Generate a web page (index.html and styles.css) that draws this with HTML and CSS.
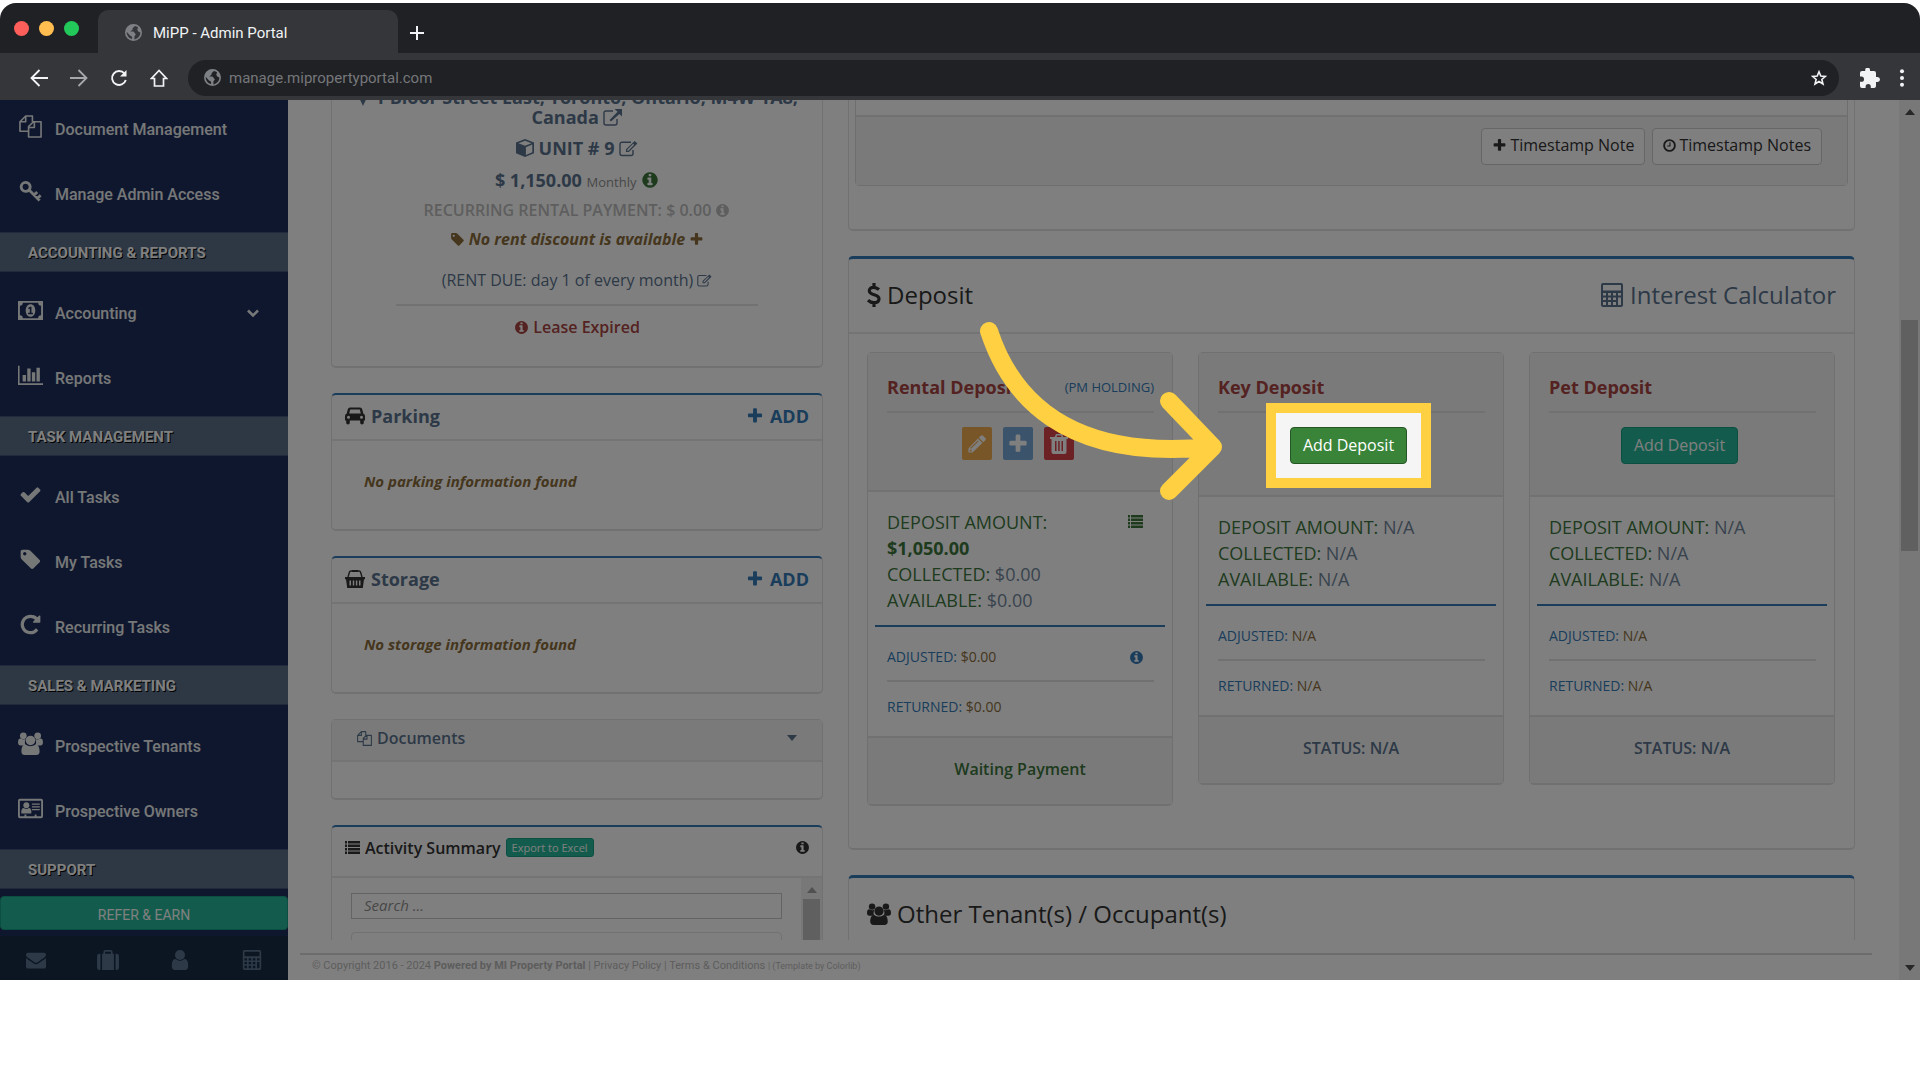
FILE: index.html
```
<!DOCTYPE html>
<html lang="en">

<head>
    <meta charset="UTF-8">
    <meta name="viewport" content="width=device-width, initial-scale=1.0">
    <title>MiPP - Admin Portal</title>
    <link rel="stylesheet" href="styles.css">
</head>

<body>
    <!-- icon set -->
    <svg class="sprite" aria-hidden="true">
        <symbol id="plus" viewBox="0 0 1792 1792"><path d="M1600 736v192q0 40-28 68t-68 28h-416v416q0 40-28 68t-68 28h-192q-40 0-68-28t-28-68v-416h-416q-40 0-68-28t-28-68v-192q0-40 28-68t68-28h416v-416q0-40 28-68t68-28h192q40 0 68 28t28 68v416h416q40 0 68 28t28 68z"/></symbol>
        <symbol id="info" viewBox="0 0 1792 1792"><path d="M1152 1376v-160q0-14-9-23t-23-9h-96v-512q0-14-9-23t-23-9h-320q-14 0-23 9t-9 23v160q0 14 9 23t23 9h96v320h-96q-14 0-23 9t-9 23v160q0 14 9 23t23 9h448q14 0 23-9t9-23zm-128-896v-160q0-14-9-23t-23-9h-192q-14 0-23 9t-9 23v160q0 14 9 23t23 9h192q14 0 23-9t9-23zm640 416q0 209-103 385.500t-279.500 279.500-385.500 103-385.500-103-279.500-279.500-103-385.500 103-385.500 279.500-279.500 385.500-103 385.500 103 279.500 279.500 103 385.500z"/></symbol>
        <symbol id="check" viewBox="0 0 1792 1792"><path d="M1671 566q0 40-28 68l-724 724-136 136q-28 28-68 28t-68-28l-136-136-362-362q-28-28-28-68t28-68l136-136q28-28 68-28t68 28l294 295 656-657q28-28 68-28t68 28l136 136q28 28 28 68z"/></symbol>
        <symbol id="tag" viewBox="0 0 1792 1792"><path d="M576 448q0-53-37.500-90.500t-90.500-37.500-90.500 37.500-37.500 90.500 37.500 90.500 90.500 37.500 90.500-37.500 37.500-90.500zm1067 576q0 53-37 90l-491 492q-39 37-91 37-53 0-90-37l-715-716q-38-37-64.500-101t-26.500-117v-416q0-52 38-90t90-38h416q53 0 117 26.500t102 64.500l715 714q37 39 37 91z"/></symbol>
        <symbol id="repeat" viewBox="0 0 1792 1792"><path d="M1664 256v448q0 26-19 45t-45 19h-448q-42 0-59-40-17-39 14-69l138-138q-148-137-349-137-104 0-198.500 40.500t-163.500 109.500-109.500 163.500-40.500 198.500 40.500 198.500 109.500 163.500 163.500 109.500 198.500 40.500q119 0 225-52t179-147q7-10 23-12 15 0 25 9l137 138q9 8 9.500 20.500t-7.500 22.500q-109 132-264 204.500t-327 72.500q-156 0-298-61t-245-164-164-245-61-298 61-298 164-245 245-164 298-61q147 0 284.500 55.500t244.500 156.500l130-129q29-31 70-14 39 17 39 59z"/></symbol>
        <symbol id="envelope" viewBox="0 0 1792 1792"><path d="M1792 710v794q0 66-47 113t-113 47h-1472q-66 0-113-47t-47-113v-794q44 49 101 87 362 246 497 345 57 42 92.500 65.500t94.500 48 110 24.500h2q51 0 110-24.500t94.500-48 92.500-65.500q170-123 498-345 57-39 100-87zm0-294q0 79-49 151t-122 123q-376 261-468 325-10 7-42.500 31t-54 38.500-52 32.500-57.500 27-50 9h-2q-23 0-50-9t-57.500-27-52-32.500-54-38.500-42.500-31q-91-64-262-182.500t-205-142.500q-62-42-117-115.500t-55-136.500q0-78 41.500-130t118.500-52h1472q65 0 112.500 47t47.500 113z"/></symbol>
        <symbol id="docs" viewBox="0 0 24 24"><path fill="none" stroke="currentColor" stroke-width="1.700" stroke-linejoin="round" d="M10 17H1V7l6-6h7v6M7 1v6H1M10 23V12l5-5h8v16zM16 7v6h-6"/></symbol>
        <symbol id="key" viewBox="0 0 24 24"><path fill="none" stroke="currentColor" stroke-width="3" d="M7 2.500a4.700 4.700 0 1 1-.1 9.400 4.700 4.700 0 0 1 .1-9.400zM10 10l11.500 11.500M15.500 16l3.500-3.500M19 19.500l3.500-3.500"/></symbol>
        <symbol id="money" viewBox="0 0 26 20"><path fill-rule="evenodd" d="M0 0h26v20H0zM5 2a3 3 0 0 1-3 3v10a3 3 0 0 1 3 3h16a3 3 0 0 1 3-3V5a3 3 0 0 1-3-3z"/><path fill-rule="evenodd" d="M13 3.500c3 0 5 2.800 5 6.500s-2 6.500-5 6.500-5-2.800-5-6.500 2-6.500 5-6.500zM10.500 14h5v-1.600H14V6h-1.500l-2 1.500.8 1.200 1-.7v4.400h-1.800z"/></symbol>
        <symbol id="chart" viewBox="0 0 27 21"><path d="M0 0h1.700v19H27v1.700H0zM5 10h3.600v7H5zM10 3h3.600v14H10zM15 7h3.600v10H15zM20 2h3.600v15H20z"/></symbol>
        <symbol id="users" viewBox="0 0 26 24"><circle cx="5.500" cy="4" r="3.500"/><circle cx="20.500" cy="4" r="3.500"/><path d="M0 11c0-3 1-4.500 3-4 2 1 3.500 1 5 .4-1.400 2.500-1 5 0 6.600H2.500C1 14 0 13 0 11zM26 11c0-3-1-4.500-3-4-2 1-3.500 1-5 .4 1.400 2.500 1 5 0 6.600h5.500c1.500 0 2.500-1 2.500-3z"/><circle cx="13" cy="8.800" r="5"/><path d="M3.500 20.500c0-4 1-7.500 4.500-7.500 3 2.400 7 2.400 10 0 3.500 0 4.500 3.500 4.500 7.500 0 2-1.300 3.500-3.500 3.500H7c-2.200 0-3.500-1.500-3.500-3.500z"/></symbol>
        <symbol id="card" viewBox="0 0 27 21"><path fill-rule="evenodd" d="M2 0h23q2 0 2 2v17q0 2-2 2H2q-2 0-2-2V2q0-2 2-2zM2 2v17h5v-2h2v2h9v-2h2v2h5V2z"/><circle cx="9" cy="7" r="3.200"/><path d="M3.500 15c0-3 .8-5 2.800-5 1.700 1.300 3.700 1.300 5.400 0 2 0 2.800 2 2.800 5 0 .7-.6 1-1.200 1H4.700c-.6 0-1.200-.3-1.200-1zM15 5h8.500v1.500H15zM15 8h8.500v1.500H15zM15 11h8.500v1.500H15z"/></symbol>
        <symbol id="calc" viewBox="0 0 22 24"><path fill-rule="evenodd" d="M2 0h18q2 0 2 2v20q0 2-2 2H2q-2 0-2-2V2q0-2 2-2zM2 2v5.500h18V2zM2 10v2.500h3V10zM7 10v2.500h3V10zM12 10v2.500h3V10zM17 10v2.500h3V10zM2 14.500V17h3v-2.500zM7 14.500V17h3v-2.500zM12 14.500V17h3v-2.500zM2 19v3h3v-3zM7 19v3h3v-3zM12 19v3h3v-3zM17 14.500V22h3v-7.500z"/></symbol>
        <symbol id="suitcase" viewBox="0 0 24 22"><path fill-rule="evenodd" d="M5.500 4H18.500V22H5.500zM7 4V2q0-2 2-2h6q2 0 2 2v2h-1.800V2H8.800v2zM3.700 4v18H2.500Q0 22 0 19.500v-13Q0 4 2.500 4zM20.300 4v18h1.200q2.500 0 2.500-2.500v-13Q24 4 21.500 4z"/></symbol>
        <symbol id="user" viewBox="0 0 18 22"><circle cx="9" cy="5.500" r="5.500"/><path d="M0 18c0-5 1-8 4.300-8 3 2.600 6.400 2.600 9.400 0C17 10 18 13 18 18c0 2.500-1.300 4-3.500 4h-11C1.300 22 0 20.500 0 18z"/></symbol>
        <symbol id="chevron" viewBox="0 0 12 9"><path fill="none" stroke="currentColor" stroke-width="2.600" d="M1 1.500l5 5 5-5"/></symbol>
        <symbol id="marker" viewBox="0 0 14 20"><path fill-rule="evenodd" d="M7 0a6 6 0 0 1 6 6c0 3-4 9-6 14C5 15 1 9 1 6a6 6 0 0 1 6-6zM7 3.500a2.700 2.700 0 1 0 0 5.400 2.700 2.700 0 0 0 0-5.400z"/></symbol>
        <symbol id="external" viewBox="0 0 19 17"><path fill="none" stroke="currentColor" stroke-width="1.400" d="M10 2H3Q1 2 1 4v10q0 2 2 2h9q2 0 2-2v-4"/><path d="M11.500 0H19v7.500l-2.600-2.600L8 12.500 6.600 11l8-8.300z"/></symbol>
        <symbol id="edit" viewBox="0 0 19 16"><path fill="none" stroke="currentColor" stroke-width="1.400" d="M12 1.700H3Q1 1.700 1 3.700V13q0 2 2 2h9q2 0 2-2V9.500"/><path fill-rule="evenodd" d="M15.700.4l2.700 2.700-8.500 8.300H7V8.700zM8.200 9.200v1h1.200l5.800-5.900-1-1z"/></symbol>
        <symbol id="cube" viewBox="0 0 18 18"><path fill-rule="evenodd" d="M9 0l9 3.500v10.800L9 18 0 14.300V3.500zM9 1.700L2.500 4.200 9 6.700l6.500-2.500zM9.900 16l6.400-2.700V5.600L9.900 8.200z"/></symbol>
        <symbol id="car" viewBox="0 0 20 17"><path fill-rule="evenodd" d="M5 0h10q1.700 0 2.200 1.700L18.300 6Q20 6.700 20 8.500V13h-1.200v2.200a1.800 1.800 0 0 1-3.600 0V13H4.800v2.200a1.800 1.800 0 0 1-3.600 0V13H0V8.500Q0 6.700 1.700 6l1.100-4.300Q3.300 0 5 0zM5.200 2l-1 4h11.600l-1-4zM3.500 8.200a1.500 1.500 0 1 0 0 3 1.500 1.500 0 0 0 0-3zM16.500 8.200a1.500 1.500 0 1 0 0 3 1.500 1.500 0 0 0 0-3z"/></symbol>
        <symbol id="basket" viewBox="0 0 20 18"><path fill-rule="evenodd" d="M0 7h20v2.200h-1L17.800 18H2.200L1 9.200H0zM4.500 10.500v5H6v-5zM7.800 10.500v5h1.400v-5zM10.900 10.500v5h1.400v-5zM14 10.500v5h1.500v-5z"/><path d="M7 0h6v2H7z"/><path fill="none" stroke="currentColor" stroke-width="1.400" d="M3 7l1.500-5Q4.800 1 6 1h8q1.200 0 1.500 1L17 7"/></symbol>
        <symbol id="list" viewBox="0 0 15 13"><path d="M0 0h2v2.400H0zM3 0h12v2.400H3zM0 3.500h2v2.400H0zM3 3.500h12v2.400H3zM0 7h2v2.400H0zM3 7h12v2.400H3zM0 10.500h2v2.400H0zM3 10.500h12v2.400H3z"/></symbol>
        <symbol id="clock" viewBox="0 0 14 14"><circle cx="7" cy="7" r="5.800" fill="none" stroke="currentColor" stroke-width="2"/><path fill="none" stroke="currentColor" stroke-width="1.200" d="M7.500 3.500v4h-3"/></symbol>
        <symbol id="pencil" viewBox="0 0 20 20"><path fill-rule="evenodd" d="M14 1q1.500-1.500 3 0l2 2q1.500 1.500 0 3l-2 2-5-5zM11 4l5 5L5 19.500H.5V15zM11 6l-8.500 8.500.8.800L11.800 7zM3 16l-1 1v1.200h1.300l1-.9z"/></symbol>
        <symbol id="trash" viewBox="0 0 18 20"><path fill-rule="evenodd" d="M6 0h6l1.300 3H18v2h-1.500v13q0 2-2 2h-11q-2 0-2-2V5H0V3h4.700zM7 1.500L6.500 3h5L11 1.500zM5 7v10h1.500V7zM8.200 7v10h1.500V7zM11.500 7v10H13V7z"/></symbol>
        <symbol id="dollar" viewBox="0 0 14 24"><path fill="none" stroke="currentColor" stroke-width="3.200" d="M12 6.500C10 4.800 8.300 4.300 6.500 4.300 4 4.300 2.300 5.600 2.300 7.700c0 5 9.700 3 9.700 8 0 2.600-2.200 4-5 4-2.400 0-4.400-.8-6-2.500M7 0v4.500M7 19.500V24"/></symbol>
        <symbol id="globe" viewBox="0 0 18 18"><path fill-rule="evenodd" d="M9 0a9 9 0 1 1 0 18A9 9 0 0 1 9 0zM10.500 2L8 4.500V6L5.500 8H9l2.500 3-1.500 2v3.300A7.300 7.300 0 0 0 16.300 9L14 8l-1-2 .8-2.600A8 8 0 0 0 10.500 2zM1.800 8.200A7.300 7.300 0 0 0 7.500 16v-2.500L5 11.800z"/></symbol>
        <symbol id="back" viewBox="0 0 18 18"><path fill="none" stroke="currentColor" stroke-width="1.800" d="M18 9H2M9.500 1L1.500 9l8 8"/></symbol>
        <symbol id="forward" viewBox="0 0 18 18"><path fill="none" stroke="currentColor" stroke-width="1.800" d="M0 9h16M8.500 1l8 8-8 8"/></symbol>
        <symbol id="reload" viewBox="0 0 18 18"><path fill="none" stroke="currentColor" stroke-width="1.900" d="M14.500 4.500A7 7 0 1 0 15.800 11"/><path d="M16.500 1v6.500H10z"/></symbol>
        <symbol id="home" viewBox="0 0 18 18"><path fill="none" stroke="currentColor" stroke-width="1.700" d="M9 1.500L1.500 9.500h3V17h9V9.500h3z"/></symbol>
        <symbol id="star" viewBox="0 0 18 18"><path fill="none" stroke="currentColor" stroke-width="1.800" d="M9 2l2 4.800 5.200.4-4 3.400 1.300 5.100L9 13l-4.500 2.700 1.300-5.100-4-3.400L7 6.800z"/></symbol>
        <symbol id="puzzle" viewBox="0 0 20 20"><path d="M17.500 9H16V5q0-2-2-2h-4V2a2.400 2.400 0 0 0-4.800 0v1H2Q0 3 0 5v3.600h1.400a2.600 2.600 0 0 1 0 5.200H0V18q0 2 2 2h3.600v-1.400a2.600 2.600 0 0 1 5.200 0V20H14q2 0 2-2v-4h1.500a2.500 2.500 0 0 0 0-5z"/></symbol>
        <symbol id="dots" viewBox="0 0 4 18"><circle cx="2" cy="2.200" r="2"/><circle cx="2" cy="9" r="2"/><circle cx="2" cy="15.800" r="2"/></symbol>
    </svg>

    <div class="browser">
        <div class="tabs">
            <div class="lights"><i class="red"></i><i class="yellow"></i><i class="green"></i></div>
            <div class="tab"><svg class="ic-17"><use href="#globe"/></svg><span>MiPP - Admin Portal</span></div>
            <button class="new-tab" aria-label="New tab"><svg viewBox="0 0 14 14"><path d="M7 0v14M0 7h14" stroke="currentColor" stroke-width="2"/></svg></button>
        </div>
        <div class="toolbar">
            <button aria-label="Back"><svg><use href="#back"/></svg></button>
            <button class="muted" aria-label="Forward"><svg><use href="#forward"/></svg></button>
            <button aria-label="Reload"><svg><use href="#reload"/></svg></button>
            <button aria-label="Home"><svg><use href="#home"/></svg></button>
            <div class="address">
                <svg class="ic-17"><use href="#globe"/></svg>
                <input type="text" aria-label="Address" value="manage.mipropertyportal.com">
                <svg class="star"><use href="#star"/></svg>
            </div>
            <button class="ext" aria-label="Extensions"><svg><use href="#puzzle"/></svg></button>
            <button class="more" aria-label="Menu"><svg><use href="#dots"/></svg></button>
        </div>

        <div class="viewport">
            <aside class="sidebar">
                <nav class="menu">
                    <div class="menu-group">
                        <a href="#"><svg><use href="#docs"/></svg>Document Management</a>
                        <a href="#"><svg><use href="#key"/></svg>Manage Admin Access</a>
                    </div>
                    <h3>ACCOUNTING &amp; REPORTS</h3>
                    <div class="menu-group">
                        <a href="#"><svg><use href="#money"/></svg>Accounting<svg class="chevron"><use href="#chevron"/></svg></a>
                        <a href="#"><svg><use href="#chart"/></svg>Reports</a>
                    </div>
                    <h3>TASK MANAGEMENT</h3>
                    <div class="menu-group">
                        <a href="#"><svg><use href="#check"/></svg>All Tasks</a>
                        <a href="#"><svg><use href="#tag"/></svg>My Tasks</a>
                        <a href="#"><svg><use href="#repeat"/></svg>Recurring Tasks</a>
                    </div>
                    <h3>SALES &amp; MARKETING</h3>
                    <div class="menu-group">
                        <a href="#"><svg><use href="#users"/></svg>Prospective Tenants</a>
                        <a href="#"><svg><use href="#card"/></svg>Prospective Owners</a>
                    </div>
                    <h3>SUPPORT</h3>
                </nav>
                <button class="refer">REFER &amp; EARN</button>
                <div class="shortcuts">
                    <a href="#" aria-label="Mail"><svg><use href="#envelope"/></svg></a>
                    <a href="#" aria-label="Portfolio"><svg><use href="#suitcase"/></svg></a>
                    <a href="#" aria-label="Profile"><svg><use href="#user"/></svg></a>
                    <a href="#" aria-label="Calculator"><svg><use href="#calc"/></svg></a>
                </div>
            </aside>

            <main class="main">
                <div class="columns">
                    <div class="col">
                        <section class="panel lease">
                            <div class="address-line"><svg class="ic-marker"><use href="#marker"/></svg> 1 Bloor Street East, Toronto, Ontario, M4W 1A8, Canada <svg class="ic-19"><use href="#external"/></svg></div>
                            <div class="unit"><svg class="ic-18"><use href="#cube"/></svg> UNIT # 9 <svg class="ic-19"><use href="#edit"/></svg></div>
                            <div class="rent">$ 1,150.00 <small>Monthly</small> <svg class="ic-18 success"><use href="#info"/></svg></div>
                            <div class="recurring">RECURRING RENTAL PAYMENT: $ 0.00 <svg class="ic-15"><use href="#info"/></svg></div>
                            <div class="discount"><svg class="ic-15"><use href="#tag"/></svg> No rent discount is available <svg class="ic-15"><use href="#plus"/></svg></div>
                            <div class="due">(RENT DUE: day 1 of every month) <svg class="ic-15"><use href="#edit"/></svg></div>
                            <hr>
                            <div class="expired"><svg class="ic-15"><use href="#info"/></svg> Lease Expired</div>
                        </section>

                        <section class="panel top-line small-panel">
                            <header>
                                <h4><svg class="ic-20"><use href="#car"/></svg>Parking</h4>
                                <a href="#"><svg class="ic-18"><use href="#plus"/></svg>ADD</a>
                            </header>
                            <p>No parking information found</p>
                        </section>

                        <section class="panel top-line small-panel">
                            <header>
                                <h4><svg class="ic-20"><use href="#basket"/></svg>Storage</h4>
                                <a href="#"><svg class="ic-18"><use href="#plus"/></svg>ADD</a>
                            </header>
                            <p>No storage information found</p>
                        </section>

                        <section class="panel documents">
                            <header>
                                <h4><svg class="ic-15"><use href="#docs"/></svg>Documents</h4>
                                <svg class="caret" viewBox="0 0 10 6"><path d="M0 0h10L5 6z"/></svg>
                            </header>
                        </section>

                        <section class="panel top-line activity">
                            <header>
                                <svg class="ic-15"><use href="#list"/></svg>
                                <h4>Activity Summary</h4>
                                <button class="badge">Export to Excel</button>
                                <svg class="ic-15 last"><use href="#info"/></svg>
                            </header>
                            <div class="activity-body">
                                <div class="activity-list">
                                    <input type="text" placeholder="Search ..." aria-label="Search activity">
                                    <div class="entry"></div>
                                </div>
                                <div class="scrollbar inner">
                                    <svg viewBox="0 0 10 6"><path d="M0 6h10L5 0z"/></svg>
                                    <div class="thumb"></div>
                                </div>
                            </div>
                        </section>
                    </div>

                    <div class="col">
                        <section class="panel notes">
                            <div class="notes-box">
                                <footer>
                                    <button class="btn-default"><svg class="ic-15"><use href="#plus"/></svg>Timestamp Note</button>
                                    <button class="btn-default"><svg class="ic-13"><use href="#clock"/></svg>Timestamp Notes</button>
                                </footer>
                            </div>
                        </section>

                        <section class="panel top-line-lg deposits">
                            <header>
                                <h2><svg class="ic-dollar"><use href="#dollar"/></svg>Deposit</h2>
                                <a href="#"><svg class="ic-24"><use href="#calc"/></svg>Interest Calculator</a>
                            </header>
                            <div class="cards">
                                <article class="card">
                                    <div class="card-head">
                                        <div class="card-title"><h4>Rental Deposit</h4><small>(PM HOLDING)</small></div>
                                        <div class="actions short">
                                            <button class="sq orange" aria-label="Edit"><svg><use href="#pencil"/></svg></button>
                                            <button class="sq blue" aria-label="Add"><svg class="big"><use href="#plus"/></svg></button>
                                            <button class="sq crimson" aria-label="Delete"><svg><use href="#trash"/></svg></button>
                                        </div>
                                    </div>
                                    <div class="card-body">
                                        <div class="totals">
                                            <div><div>DEPOSIT AMOUNT: <b>$1,050.00</b></div><svg class="ic-15"><use href="#list"/></svg></div>
                                            <div>COLLECTED: <span>$0.00</span></div>
                                            <div>AVAILABLE: <span>$0.00</span></div>
                                        </div>
                                        <div class="line"><div>ADJUSTED: <span>$0.00</span></div><svg class="ic-15"><use href="#info"/></svg></div>
                                        <div class="line">RETURNED: <span>$0.00</span></div>
                                    </div>
                                    <div class="card-foot success">Waiting Payment</div>
                                </article>

                                <article class="card">
                                    <div class="card-head">
                                        <div class="card-title"><h4>Key Deposit</h4></div>
                                        <div class="actions">
                                            <div class="step">
                                                <button class="btn-add active">Add Deposit</button>
                                                <div class="spotlight"></div>
                                                <svg class="arrow" viewBox="0 0 260 190"><path d="M23 19C43 80 95 150 245 135M203 89l44 46-44 44"/></svg>
                                            </div>
                                        </div>
                                    </div>
                                    <div class="card-body">
                                        <div class="totals">
                                            <div>DEPOSIT AMOUNT: <span>N/A</span></div>
                                            <div>COLLECTED: <span>N/A</span></div>
                                            <div>AVAILABLE: <span>N/A</span></div>
                                        </div>
                                        <div class="line">ADJUSTED: <span>N/A</span></div>
                                        <div class="line">RETURNED: <span>N/A</span></div>
                                    </div>
                                    <div class="card-foot">STATUS: N/A</div>
                                </article>

                                <article class="card">
                                    <div class="card-head">
                                        <div class="card-title"><h4>Pet Deposit</h4></div>
                                        <div class="actions"><button class="btn-add">Add Deposit</button></div>
                                    </div>
                                    <div class="card-body">
                                        <div class="totals">
                                            <div>DEPOSIT AMOUNT: <span>N/A</span></div>
                                            <div>COLLECTED: <span>N/A</span></div>
                                            <div>AVAILABLE: <span>N/A</span></div>
                                        </div>
                                        <div class="line">ADJUSTED: <span>N/A</span></div>
                                        <div class="line">RETURNED: <span>N/A</span></div>
                                    </div>
                                    <div class="card-foot">STATUS: N/A</div>
                                </article>
                            </div>
                        </section>

                        <section class="panel top-line-lg tenants">
                            <header>
                                <h2><svg class="ic-24"><use href="#users"/></svg>Other Tenant(s) / Occupant(s)</h2>
                            </header>
                        </section>
                    </div>
                </div>
                <footer class="page-foot">
                    <div>© Copyright 2016 - 2024 <b>Powered by MI Property Portal</b> | <a href="#">Privacy Policy</a> | <a href="#">Terms &amp; Conditions</a> <small>| (Template by <a href="#">Colorlib</a>)</small></div>
                </footer>
            </main>

            <div class="scrollbar">
                <svg viewBox="0 0 10 6"><path d="M0 6h10L5 0z"/></svg>
                <div class="thumb"></div>
                <svg viewBox="0 0 10 6"><path d="M0 0h10L5 6z"/></svg>
            </div>
        </div>
    </div>
</body>

</html>
```
FILE: styles.css
```
* {
    box-sizing: border-box;
}

body {
    margin: 0;
    padding-top: 3px;
    background: #fff;
    font-family: "Open Sans", "Noto Sans", sans-serif;
    font-size: 16px;
    color: #5a738e;
}

h2, h3, h4, p {
    margin: 0;
}

a {
    color: inherit;
    text-decoration: none;
}

button, input {
    font-family: inherit;
    margin: 0;
}

button {
    cursor: pointer;
}

svg {
    fill: currentColor;
    flex: none;
}

.sprite {
    display: none;
}

.ic-13 { width: 13px; height: 13px; }
.ic-15 { width: 15px; height: 15px; }
.ic-17 { width: 17px; height: 17px; }
.ic-18 { width: 18px; height: 18px; }
.ic-19 { width: 19px; height: 17px; }
.ic-20 { width: 20px; height: 18px; }
.ic-24 { width: 24px; height: 24px; }
.ic-marker { width: 14px; height: 18px; }
.ic-dollar { width: 14px; height: 24px; }

/* browser frame */

.browser {
    display: flex;
    flex-direction: column;
    height: calc(100vh - 103px);
    border-radius: 16px 16px 0 0;
    overflow: hidden;
    background: #202124;
    font-family: Roboto, sans-serif;
}

.tabs {
    display: flex;
    align-items: flex-end;
    height: 50px;
    color: #f1f3f4;
}

.lights {
    display: flex;
    gap: 10px;
    width: 98px;
    padding: 0 0 17px 14px;
}

.lights i {
    width: 15px;
    height: 15px;
    border-radius: 50%;
}

.red { background: #ff5f5a; }
.yellow { background: #ffbe4f; }
.green { background: #22c95a; }

.tab {
    display: flex;
    align-items: center;
    gap: 11px;
    width: 300px;
    height: 43px;
    padding: 2px 0 0 27px;
    border-radius: 10px 10px 0 0;
    background: #35363a;
    font-size: 15px;
}

.tab svg, .address .ic-17 {
    color: #7d8084;
}

.new-tab {
    height: 40px;
    padding: 0 12px;
    border: 0;
    background: none;
    color: #f1f3f4;
}

.new-tab svg {
    display: block;
    width: 14px;
    height: 14px;
}

.toolbar {
    display: flex;
    align-items: center;
    height: 47px;
    padding: 2px 9px 0 19px;
    background: #35363a;
}

.toolbar button {
    width: 40px;
    padding: 0;
    border: 0;
    background: none;
    color: #f1f3f4;
}

.toolbar button svg {
    display: block;
    width: 18px;
    height: 18px;
    margin: 0 auto;
}

.toolbar .muted {
    color: #a5a7aa;
}

.address {
    display: flex;
    flex: 1;
    align-items: center;
    gap: 8px;
    height: 36px;
    margin: 0 11px 0 9px;
    padding: 0 12px 0 16px;
    border-radius: 18px;
    background: #202124;
}

.address input {
    flex: 1;
    padding: 0;
    border: 0;
    background: none;
    color: #75777b;
    font-size: 15px;
}

.star {
    width: 16px;
    height: 16px;
    color: #f1f3f4;
}

.toolbar .ext svg {
    width: 20px;
    height: 20px;
}

.toolbar .more {
    width: 18px;
    margin-left: 3px;
}

/* page area, darkened by the spotlight shadow */

.viewport {
    position: relative;
    display: flex;
    flex: 1;
    min-height: 0;
    overflow: hidden;
    background: #fff;
}

.sidebar {
    display: flex;
    flex-direction: column;
    width: 288px;
    background: #1f2e5c;
    color: #ecf0f1;
}

.menu {
    display: flex;
    flex: 1;
    flex-direction: column;
    justify-content: flex-end;
    min-height: 0;
    overflow: hidden;
}

.menu h3 {
    flex: none;
    height: 40px;
    padding-left: 28px;
    border: solid #3f5678;
    border-width: 1px 0;
    background: #5a7089;
    color: #fff;
    font-size: 15px;
    line-height: 40px;
    text-shadow: 1px 1px #000;
}

.menu-group {
    flex: none;
    padding: 9px 0 5px;
}

.menu-group a {
    display: flex;
    align-items: center;
    height: 65px;
    padding-left: 18px;
    font-size: 16px;
    font-weight: 500;
}

.menu-group svg {
    width: 25px;
    height: 23px;
    margin: 0 12px 6px 0;
}

.menu-group .chevron {
    width: 12px;
    height: 9px;
    margin: 0 29px 0 auto;
}

.refer {
    height: 34px;
    margin: 7px 0 6px;
    padding: 3px 0 0;
    border: 1px solid #169f85;
    border-radius: 4px;
    background: #26b99a;
    color: #fff;
    font-size: 14px;
}

.shortcuts {
    display: flex;
    height: 44px;
    padding-top: 4px;
    background: #172d44;
    color: #5a738e;
}

.shortcuts a {
    display: flex;
    flex: 1;
    align-items: center;
    justify-content: center;
}

.shortcuts svg {
    width: 22px;
    height: 20px;
}

.main {
    display: flex;
    flex: 1;
    flex-direction: column;
    min-width: 0;
    font-family: "Open Sans", "Noto Sans", sans-serif;
}

.columns {
    display: grid;
    flex: 1;
    grid-template-columns: minmax(0, 492fr) minmax(0, 1007fr);
    gap: 25px;
    min-height: 0;
    margin-top: -20px;
    padding: 0 44px 0 43px;
}

.col {
    display: flex;
    flex-direction: column;
    gap: 25px;
    min-height: 0;
}

.panel {
    flex: none;
    border: 1px solid #e2e2e2;
    border-bottom-width: 2px;
    border-radius: 5px;
    background: #fff;
}

.top-line {
    border-top: 2px solid #337ab7;
}

.top-line-lg {
    border-top: 3px solid #337ab7;
}

.panel header {
    display: flex;
    align-items: center;
    border-bottom: 2px solid #e8e8e8;
}

.panel h4 {
    display: flex;
    align-items: center;
    font-weight: 600;
}

hr {
    width: 362px;
    margin: 0;
    border: 0;
    border-top: 2px solid #e5e5e5;
}

.success {
    color: #3c763d;
}

/* lease summary */

.lease {
    display: flex;
    flex-direction: column;
    align-items: center;
    height: 288px;
    padding: 6px 20px 0;
    text-align: center;
}

.lease svg {
    vertical-align: -2px;
}

.address-line {
    margin-bottom: 5px;
    font-size: 18px;
    font-weight: 700;
    line-height: 20px;
}

.unit, .rent {
    font-size: 18px;
    font-weight: 700;
    line-height: 32px;
}

.rent small {
    color: #8f8f8f;
    font-size: 13px;
    font-weight: 400;
}

.recurring {
    color: #bdbdbd;
    font-weight: 600;
    line-height: 24px;
}

.discount {
    color: #8a6d3b;
    font-style: italic;
    font-weight: 700;
    line-height: 34px;
}

.due {
    padding: 10px 0;
    line-height: 28px;
}

.expired {
    padding-top: 6px;
    color: #a94442;
    font-weight: 600;
    line-height: 30px;
}

/* parking, storage, documents */

.small-panel header {
    justify-content: space-between;
    height: 46px;
    padding: 0 13px 2px;
}

.small-panel h4, .small-panel a {
    display: flex;
    align-items: center;
    gap: 6px;
    font-size: 18px;
    font-weight: 700;
}

.small-panel a {
    color: #337ab7;
}

.small-panel h4 svg {
    color: #333;
}

.small-panel p {
    height: 88px;
    padding-left: 32px;
    color: #8a6d3b;
    font-size: 15px;
    font-style: italic;
    font-weight: 700;
    line-height: 80px;
}

.documents {
    height: 81px;
}

.documents header {
    justify-content: space-between;
    height: 42px;
    padding: 0 25px 4px;
    background: #f5f5f5;
}

.documents h4 {
    gap: 5px;
    font-size: 16px;
}

.caret {
    width: 10px;
    height: 6px;
}

.activity {
    height: 300px;
}

.activity header {
    gap: 5px;
    height: 51px;
    padding: 0 12px 8px 13px;
    color: #333;
}

.activity h4 {
    font-size: 16px;
}

.badge {
    height: 19px;
    padding: 0 5px;
    border: 1px solid #169f85;
    border-radius: 3px;
    background: #26b99a;
    color: #fff;
    font-size: 11px;
    line-height: 15px;
}

.last {
    margin-left: auto;
}

.activity-body {
    display: flex;
    height: 200px;
}

.activity-list {
    flex: 1;
    padding: 15px 19px;
}

.activity input {
    display: block;
    width: 100%;
    height: 26px;
    padding: 0 12px 2px;
    border: 1px solid #c8c8c8;
    background: #fff;
    font-size: 15px;
    font-style: italic;
}

.activity input::placeholder {
    color: #909090;
}

.entry {
    height: 80px;
    margin-top: 13px;
    border: 1px solid #e2e2e2;
    border-radius: 4px;
}

/* notes */

.notes {
    height: 151px;
    padding: 0 6px;
}

.notes-box {
    border: 1px solid #ddd;
    border-radius: 0 0 4px 4px;
}

.notes-box footer {
    display: flex;
    justify-content: flex-end;
    gap: 7px;
    height: 70px;
    margin-top: 33px;
    padding: 11px 25px 0;
    border-top: 2px solid #e2e2e2;
    background: #f5f5f5;
}

.btn-default {
    display: flex;
    align-items: center;
    gap: 3px;
    height: 37px;
    padding: 0 10px 3px;
    border: 1px solid #ccc;
    border-radius: 4px;
    background: #fff;
    color: #333;
    font-size: 16px;
}

/* deposits */

.deposits {
    height: 594px;
}

.deposits header, .tenants header {
    justify-content: space-between;
    height: 75px;
    padding: 0 18px 2px;
}

.panel h2, .deposits header a {
    display: flex;
    align-items: center;
    gap: 6px;
    font-size: 24px;
    font-weight: 400;
}

.panel h2 {
    color: #333;
}

.tenants {
    height: 200px;
}

.cards {
    display: grid;
    grid-template-columns: repeat(3, minmax(0, 1fr));
    align-items: start;
    gap: 25px;
    padding: 18px 19px 0 18px;
}

.card {
    border: 1px solid #e0e0e0;
    border-bottom-width: 2px;
    border-radius: 5px;
}

.card-head {
    padding: 17px 18px 0 19px;
    background: #f5f5f5;
    border-bottom: 2px solid #e5e5e5;
}

.card-title {
    display: flex;
    align-items: center;
    justify-content: space-between;
    height: 43px;
    padding-bottom: 8px;
    border-bottom: 2px solid #e2e2e2;
}

.card-title h4 {
    color: #a94442;
    font-size: 18px;
    font-weight: 700;
}

.card-title small {
    color: #337ab7;
    font-size: 13px;
}

.actions {
    display: flex;
    align-items: flex-start;
    justify-content: center;
    gap: 11px;
    height: 82px;
    padding: 14px 6px 0 0;
}

.actions.short {
    height: 77px;
}

.sq {
    width: 30px;
    height: 33px;
    padding: 0;
    border: 0;
    border-radius: 2px;
    color: #fff;
}

.sq svg {
    display: block;
    width: 18px;
    height: 20px;
    margin: auto;
}

.sq .big {
    width: 22px;
    height: 22px;
}

.orange { background: #f0ad4e; }
.blue { background: #76a7d6; }
.crimson { background: #d9434a; }

.btn-add {
    height: 37px;
    padding: 0 12px 2px;
    border: 1px solid #169f85;
    border-radius: 4px;
    background: #26b99a;
    color: #fff;
    font-size: 16px;
}

.btn-add.active {
    border-color: #255625;
    background: #398439;
}

/* tutorial marker: its shadow dims everything else on the page */

.step {
    position: relative;
}

.spotlight {
    position: absolute;
    inset: -24px;
    z-index: 10;
    border: 10px solid #ffd042;
    box-shadow: 0 0 0 3000px rgba(0, 0, 0, .5);
    pointer-events: none;
}

.arrow {
    position: absolute;
    right: calc(100% + 64px);
    bottom: -38px;
    z-index: 11;
    width: 260px;
    height: 190px;
    fill: none;
    stroke: #ffd042;
    stroke-width: 18;
    stroke-linecap: round;
    stroke-linejoin: round;
    pointer-events: none;
}

.card-body {
    padding: 0 7px;
    color: #337ab7;
}

.totals {
    padding: 17px 12px 12px;
    border-bottom: 2px solid #337ab7;
    color: #3c763d;
    font-size: 18px;
    line-height: 26px;
}

.totals > div, .line {
    display: flex;
    justify-content: space-between;
    white-space: pre-wrap;
}

.totals > div, .totals + .line {
    justify-content: flex-start;
}

.totals svg, .line svg {
    margin: 5px 10px 0 auto;
}

.totals b {
    display: block;
    font-weight: 700;
}

.totals span {
    color: #73879c;
}

.line {
    margin: 0 11px 0 12px;
    padding: 18px 0 11px;
    font-size: 14px;
    line-height: 24px;
}

.line + .line {
    justify-content: flex-start;
    padding: 13px 0 17px;
    border-top: 2px solid #e2e2e2;
}

.line span {
    color: #8a6d3b;
}

.card-foot {
    height: 68px;
    border-top: 2px solid #e2e2e2;
    background: #f5f5f5;
    font-weight: 600;
    line-height: 62px;
    text-align: center;
}

/* page footer covers the scrolled columns */

.page-foot {
    position: relative;
    z-index: 1;
    height: 40px;
    padding: 13px 27px 0 12px;
    background: #fff;
    color: #bbb;
    font: 11px/22px Roboto, sans-serif;
}

.page-foot div {
    padding-left: 12px;
    border-top: 2px solid #d9d9d9;
}

.page-foot small {
    font-size: 9px;
}

.scrollbar {
    display: flex;
    flex-direction: column;
    align-items: center;
    width: 21px;
    padding: 9px 2px;
    background: #f1f1f1;
    color: #505050;
}

.scrollbar svg {
    width: 10px;
    height: 6px;
}

.scrollbar .thumb {
    width: 100%;
    height: 231px;
    margin: 205px 0 auto;
    background: #c1c1c1;
}

.scrollbar.inner {
    color: #a0a0a0;
}

.scrollbar.inner .thumb {
    margin-top: 6px;
}
```
